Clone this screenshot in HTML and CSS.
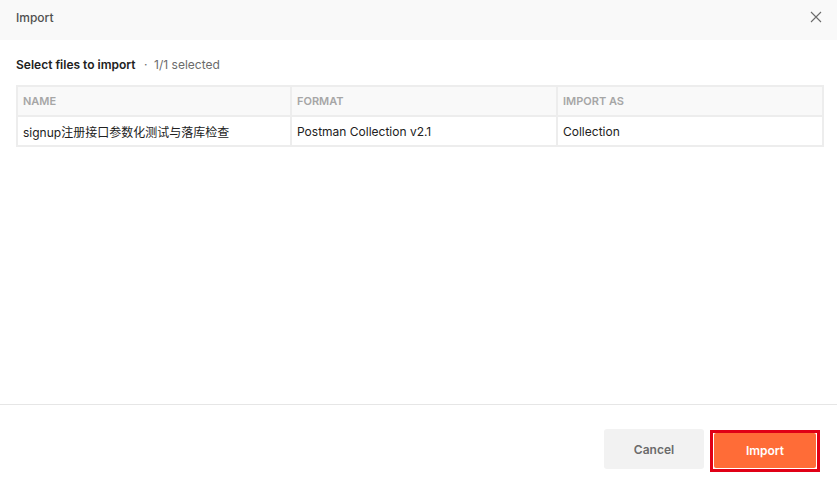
FILE: index.html
```html
<!DOCTYPE html>
<html>
<head>
<title>Import</title>
<link rel="stylesheet" href="styles.css">
</head>
<body>
<div class="modal">
  <div class="modal-header">
    <span class="modal-title">Import</span>
    <svg class="close" width="12" height="12" viewBox="0 0 12 12">
      <path d="M1 1 L11 11 M11 1 L1 11" stroke="#6b6b6b" stroke-width="1.1" fill="none"/>
    </svg>
  </div>
  <div class="modal-body">
    <div class="caption">
      <span class="caption-main">Select files to import</span>
      <span class="caption-sub">&middot;&nbsp; 1/1 selected</span>
    </div>
    <table class="files">
      <thead>
        <tr>
          <th class="col-name">NAME</th>
          <th class="col-format">FORMAT</th>
          <th>IMPORT AS</th>
        </tr>
      </thead>
      <tbody>
        <tr>
          <td>signup注册接口参数化测试与落库检查</td>
          <td>Postman Collection v2.1</td>
          <td>Collection</td>
        </tr>
      </tbody>
    </table>
  </div>
  <div class="modal-footer">
    <button class="btn btn-cancel">Cancel</button>
    <span class="highlight">
      <button class="btn btn-import">Import</button>
    </span>
  </div>
</div>
</body>
</html>
```

FILE: styles.css
```css
html, body {
  margin: 0;
  height: 100%;
}

body {
  font-family: Inter, "Noto Sans CJK SC", sans-serif;
  background-color: #fff;
  color: #212121;
}

.modal {
  height: 478px;
  display: flex;
  flex-direction: column;
}

.modal-header {
  height: 40px;
  flex-shrink: 0;
  background-color: #f9f9f9;
  display: flex;
  align-items: center;
  justify-content: space-between;
  padding: 0 15px 0 16px;
  box-sizing: border-box;
}

.modal-title {
  font-size: 12px;
  font-weight: 500;
  color: #505050;
  margin-top: -6px;
}

.close {
  margin-top: -6px;
}

.modal-body {
  flex: 1;
  padding: 17px 13px 0 16px;
}

.caption {
  font-size: 12px;
  line-height: 16px;
  margin-bottom: 12px;
}

.caption-main {
  font-weight: 600;
  color: #212121;
}

.caption-sub {
  color: #6b6b6b;
  margin-left: 5px;
}

.files {
  width: 100%;
  border-collapse: collapse;
  border: 2px solid #ededed;
}

.files th,
.files td {
  border: 2px solid #ededed;
  text-align: left;
  padding: 0 5px;
  height: 28px;
}

.files th {
  background-color: #f9f9f9;
  font-size: 11px;
  font-weight: 600;
  color: #a6a6a6;
}

.files td {
  font-size: 12px;
  color: #212121;
}

.col-name {
  width: 262px;
}

.col-format {
  width: 254px;
}

.modal-footer {
  height: 74px;
  flex-shrink: 0;
  border-top: 1px solid #e6e6e6;
  box-sizing: border-box;
  display: flex;
  justify-content: flex-end;
  align-items: flex-start;
  padding: 24px 17px 0 0;
}

.btn {
  font-family: Inter, sans-serif;
  font-size: 12px;
  font-weight: 600;
  border: none;
  border-radius: 3px;
  cursor: pointer;
}

.btn-cancel {
  width: 100px;
  height: 40px;
  background-color: #f2f2f2;
  color: #6b6b6b;
  margin-right: 6px;
}

.highlight {
  display: flex;
  margin-top: 1px;
  border: 3px solid #e00016;
  padding: 0 1px 1px 1px;
}

.btn-import {
  width: 102px;
  height: 35px;
  background-color: #ff6c37;
  color: #fff;
  border-radius: 2px;
}
```
